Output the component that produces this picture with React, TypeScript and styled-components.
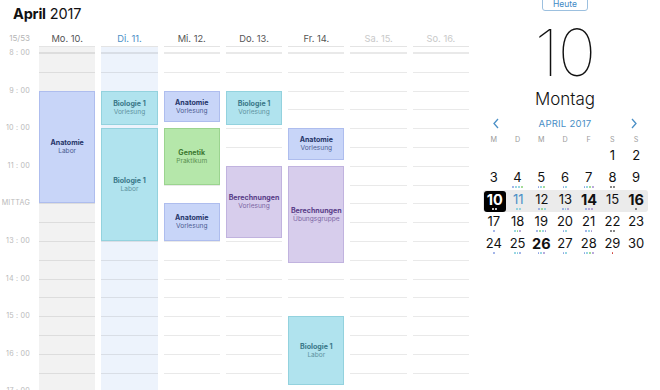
import React from 'react'
import styled, { createGlobalStyle } from 'styled-components'

const GlobalStyle = createGlobalStyle`
  html, body {
    margin: 0;
    padding: 0;
    background: #ffffff;
  }
  body {
    font-family: Inter, "Noto Sans", "Liberation Sans", sans-serif;
    color: #111;
    -webkit-font-smoothing: antialiased;
  }
`

const HOUR = 37.6
const START_MIN = 8 * 60
const FIRST_LINE = 6
const GRID_COLUMNS = '33px repeat(7, 56.3px)'

type Tone = 'blue' | 'cyan' | 'green' | 'purple'

const tones: Record<Tone, { bg: string; border: string; title: string; sub: string }> = {
  blue: { bg: '#c8d5f8', border: '#aebdee', title: '#26356a', sub: '#4d5d93' },
  cyan: { bg: '#b0e3ee', border: '#93d2de', title: '#3a7889', sub: '#5f93a1' },
  green: { bg: '#b5e7aa', border: '#9bd48f', title: '#3e7a32', sub: '#5e9354' },
  purple: { bg: '#d7cdec', border: '#c1b3df', title: '#5b3f8a', sub: '#7b66a3' },
}

const Page = styled.div`
  width: 660px;
  height: 390px;
  overflow: hidden;
  display: flex;
`

const Main = styled.div`
  width: 482px;
  display: flex;
  flex-direction: column;
  min-height: 0;
`

const TitleBar = styled.div`
  flex-shrink: 0;
  height: 26px;
  padding-left: 13px;
  display: flex;
  align-items: center;
  font-size: 14.5px;
  letter-spacing: -0.2px;
  margin-bottom: 4px;
`

const TitleMonth = styled.span`
  font-weight: 700;
  margin-right: 4px;
`

const TitleYear = styled.span`
  font-weight: 400;
`

const DayHeaderRow = styled.div`
  flex-shrink: 0;
  display: grid;
  grid-template-columns: ${GRID_COLUMNS};
  column-gap: 6px;
  height: 16px;
  align-items: center;
`

const WeekNumber = styled.div`
  font-size: 8px;
  color: #b5b5b5;
  text-align: right;
  padding-right: 3px;
`

const DayLabel = styled.div<{ $state: 'normal' | 'today' | 'weekend' }>`
  font-size: 9.3px;
  text-align: center;
  color: ${(p) => (p.$state === 'today' ? '#4a8fc6' : p.$state === 'weekend' ? '#c9c9c9' : '#555')};
`

const Body = styled.div`
  flex: 1;
  min-height: 0;
  overflow: hidden;
  display: grid;
  grid-template-columns: ${GRID_COLUMNS};
  column-gap: 6px;
`

const TimeColumn = styled.div`
  display: flex;
  flex-direction: column;
  padding-top: ${FIRST_LINE + 1 - 5}px;
`

const TimeLabel = styled.div`
  height: ${HOUR}px;
  flex-shrink: 0;
  font-size: 7.2px;
  line-height: 10px;
  color: #bababa;
  text-align: right;
  padding-right: 3px;
  letter-spacing: 0.2px;
`

const DayColumn = styled.div<{ $bg: string }>`
  position: relative;
  border-top: 1px solid #e4e4e4;
  background-color: ${(p) => p.$bg};
  background-image: repeating-linear-gradient(
    to bottom,
    rgba(0, 0, 0, 0.085) 0,
    rgba(0, 0, 0, 0.085) 1px,
    transparent 1px,
    transparent ${HOUR / 2}px
  );
  background-position: 0 ${FIRST_LINE}px;
`

const EventBox = styled.div<{ $tone: Tone }>`
  position: absolute;
  left: 0;
  right: 0;
  box-sizing: border-box;
  background: ${(p) => tones[p.$tone].bg};
  border: 1px solid ${(p) => tones[p.$tone].border};
  display: flex;
  flex-direction: column;
  align-items: center;
  justify-content: center;
  text-align: center;
`

const EventTitle = styled.div<{ $tone: Tone }>`
  font-size: 7.1px;
  font-weight: 700;
  line-height: 9px;
  color: ${(p) => tones[p.$tone].title};
`

const EventSub = styled.div<{ $tone: Tone }>`
  font-size: 6.6px;
  line-height: 8.5px;
  color: ${(p) => tones[p.$tone].sub};
`

/* sidebar */

const Sidebar = styled.div`
  width: 166px;
  display: flex;
  flex-direction: column;
  align-items: center;
  min-height: 0;

  & > * {
    flex-shrink: 0;
  }
`

const TodayButton = styled.div`
  margin-top: -3px;
  width: 46px;
  height: 14px;
  box-sizing: border-box;
  border: 1px solid #9cc0df;
  border-radius: 3px;
  color: #3f8ac5;
  font-size: 8.5px;
  display: flex;
  align-items: center;
  justify-content: center;
`

const BigDay = styled.div`
  margin-top: 13px;
  font-size: 65px;
  font-weight: 100;
  line-height: 58px;
  color: #111;
  letter-spacing: -1px;
`

const Weekday = styled.div`
  margin-top: 7px;
  font-size: 17px;
  line-height: 20px;
  font-weight: 300;
  color: #111;
`

const MonthNav = styled.div`
  align-self: stretch;
  margin-top: 5px;
  height: 18px;
  display: flex;
  align-items: center;
  justify-content: space-between;
  padding: 0 10px 0 10px;
`

const MonthName = styled.div`
  font-size: 9.6px;
  color: #4a8fc6;
  letter-spacing: 0.2px;
`

const Chevron = styled.svg`
  width: 8px;
  height: 11px;
`

const WeekGrid = styled.div`
  align-self: stretch;
  display: grid;
  grid-template-columns: repeat(7, 1fr);
`

const WeekLetters = styled(WeekGrid)`
  height: 14px;
  align-items: center;
`

const Letter = styled.div`
  font-size: 7.2px;
  color: #9a9a9a;
  text-align: center;
`

const WeekRow = styled(WeekGrid)<{ $active?: boolean }>`
  height: 22px;
  margin-left: ${(p) => (p.$active ? '1px' : '0')};
  background: ${(p) => (p.$active ? '#ebebeb' : 'transparent')};
  border-radius: 3px;
`

const DayCell = styled.div<{ $selected?: boolean }>`
  display: flex;
  flex-direction: column;
  align-items: center;
  margin: 1px 1px 0 1px;
  border-radius: 3px;
  background: ${(p) => (p.$selected ? '#000' : 'transparent')};
`

const DayNum = styled.div<{ $bold?: boolean; $color: string }>`
  margin-top: 1px;
  font-size: ${(p) => (p.$bold ? '14.5px' : '13px')};
  font-weight: ${(p) => (p.$bold ? 700 : 400)};
  line-height: 15px;
  color: ${(p) => p.$color};
`

const Dots = styled.div`
  display: flex;
  gap: 1px;
  height: 3px;
  margin-top: 1px;
`

const Dot = styled.span<{ $c: string }>`
  width: 1.8px;
  height: 1.8px;
  border-radius: 50%;
  background: ${(p) => p.$c};
`

type CalEvent = { day: number; start: string; end: string; title: string; sub: string; tone: Tone }

const events: CalEvent[] = [
  { day: 0, start: '9:00', end: '12:00', title: 'Anatomie', sub: 'Labor', tone: 'blue' },
  { day: 1, start: '9:00', end: '9:55', title: 'Biologie 1', sub: 'Vorlesung', tone: 'cyan' },
  { day: 1, start: '10:00', end: '13:00', title: 'Biologie 1', sub: 'Labor', tone: 'cyan' },
  { day: 2, start: '9:00', end: '9:50', title: 'Anatomie', sub: 'Vorlesung', tone: 'blue' },
  { day: 2, start: '10:00', end: '11:30', title: 'Genetik', sub: 'Praktikum', tone: 'green' },
  { day: 2, start: '12:00', end: '13:00', title: 'Anatomie', sub: 'Vorlesung', tone: 'blue' },
  { day: 3, start: '9:00', end: '9:55', title: 'Biologie 1', sub: 'Vorlesung', tone: 'cyan' },
  { day: 3, start: '11:00', end: '12:55', title: 'Berechnungen', sub: 'Vorlesung', tone: 'purple' },
  { day: 4, start: '10:00', end: '10:50', title: 'Anatomie', sub: 'Vorlesung', tone: 'blue' },
  { day: 4, start: '11:00', end: '13:35', title: 'Berechnungen', sub: 'Übungsgruppe', tone: 'purple' },
  { day: 4, start: '15:00', end: '16:50', title: 'Biologie 1', sub: 'Labor', tone: 'cyan' },
]

const days = [
  { label: 'Mo. 10.', state: 'normal' as const, bg: '#f2f2f2' },
  { label: 'Di. 11.', state: 'today' as const, bg: '#edf3fc' },
  { label: 'Mi. 12.', state: 'normal' as const, bg: '#ffffff' },
  { label: 'Do. 13.', state: 'normal' as const, bg: '#ffffff' },
  { label: 'Fr. 14.', state: 'normal' as const, bg: '#ffffff' },
  { label: 'Sa. 15.', state: 'weekend' as const, bg: '#ffffff' },
  { label: 'So. 16.', state: 'weekend' as const, bg: '#ffffff' },
]

const hours = ['8 : 00', '9 : 00', '10 : 00', '11 : 00', 'MITTAG', '13 : 00', '14 : 00', '15 : 00', '16 : 00', '17 : 00']

const toMin = (t: string) => {
  const [h, m] = t.split(':').map(Number)
  return h * 60 + m
}

const B = '#8aa0e2'
const C = '#7ccbdb'
const G = '#8ad27a'
const P = '#a592d3'
const K = '#666666'
const W = '#ffffff'
const R = '#cf3b34'

const dots: Record<number, string[]> = {
  4: [B, C, C, G],
  5: [B, C, G],
  6: [B, C],
  7: [B, C, G, P],
  8: [K, K],
  10: [W, W],
  11: [C, C],
  12: [B, G, C],
  13: [B, C, P],
  14: [B, P, P],
  16: [K],
  17: [B],
  18: [C, G, P],
  19: [B, G, C, P],
  20: [B, C],
  21: [B, C, P],
  22: [K, K],
  24: [B],
  25: [C, C, B],
  26: [B, C, P],
  27: [B, C],
  28: [B, C, G, P],
  29: [R],
}

const weeks: (number | null)[][] = [
  [null, null, null, null, null, 1, 2],
  [3, 4, 5, 6, 7, 8, 9],
  [10, 11, 12, 13, 14, 15, 16],
  [17, 18, 19, 20, 21, 22, 23],
  [24, 25, 26, 27, 28, 29, 30],
]

const boldDays = [14, 16, 26]

const MiniCalendar = () => (
  <>
    <MonthNav>
      <Chevron viewBox="0 0 8 11">
        <path d="M6 1 L2 5.5 L6 10" fill="none" stroke="#4a8fc6" strokeWidth="1.3" />
      </Chevron>
      <MonthName>APRIL 2017</MonthName>
      <Chevron viewBox="0 0 8 11">
        <path d="M2 1 L6 5.5 L2 10" fill="none" stroke="#4a8fc6" strokeWidth="1.3" />
      </Chevron>
    </MonthNav>
    <WeekLetters>
      {['M', 'D', 'M', 'D', 'F', 'S', 'S'].map((l, i) => (
        <Letter key={i}>{l}</Letter>
      ))}
    </WeekLetters>
    {weeks.map((week, wi) => (
      <WeekRow key={wi} $active={wi === 2}>
        {week.map((d, di) => {
          if (d === null) return <DayCell key={di} />
          const selected = d === 10
          const color = selected ? '#fff' : d === 11 ? '#4a8fc6' : '#111'
          return (
            <DayCell key={di} $selected={selected}>
              <DayNum $bold={selected || boldDays.includes(d)} $color={color}>
                {d}
              </DayNum>
              <Dots>
                {(dots[d] || []).map((c, ci) => (
                  <Dot key={ci} $c={c} />
                ))}
              </Dots>
            </DayCell>
          )
        })}
      </WeekRow>
    ))}
  </>
)

export default function App() {
  return (
    <>
      <GlobalStyle />
      <Page>
        <Main>
          <TitleBar>
            <TitleMonth>April</TitleMonth>
            <TitleYear>2017</TitleYear>
          </TitleBar>
          <DayHeaderRow>
            <WeekNumber>15/53</WeekNumber>
            {days.map((d) => (
              <DayLabel key={d.label} $state={d.state}>
                {d.label}
              </DayLabel>
            ))}
          </DayHeaderRow>
          <Body>
            <TimeColumn>
              {hours.map((h) => (
                <TimeLabel key={h}>{h}</TimeLabel>
              ))}
            </TimeColumn>
            {days.map((d, i) => (
              <DayColumn key={d.label} $bg={d.bg}>
                {events
                  .filter((e) => e.day === i)
                  .map((e, k) => {
                    const s = toMin(e.start)
                    const top = FIRST_LINE + ((s - START_MIN) / 60) * HOUR
                    const height = ((toMin(e.end) - s) / 60) * HOUR
                    return (
                      <EventBox key={k} $tone={e.tone} style={{ top, height }}>
                        <EventTitle $tone={e.tone}>{e.title}</EventTitle>
                        <EventSub $tone={e.tone}>{e.sub}</EventSub>
                      </EventBox>
                    )
                  })}
              </DayColumn>
            ))}
          </Body>
        </Main>
        <Sidebar>
          <TodayButton>Heute</TodayButton>
          <BigDay>10</BigDay>
          <Weekday>Montag</Weekday>
          <MiniCalendar />
        </Sidebar>
      </Page>
    </>
  )
}
